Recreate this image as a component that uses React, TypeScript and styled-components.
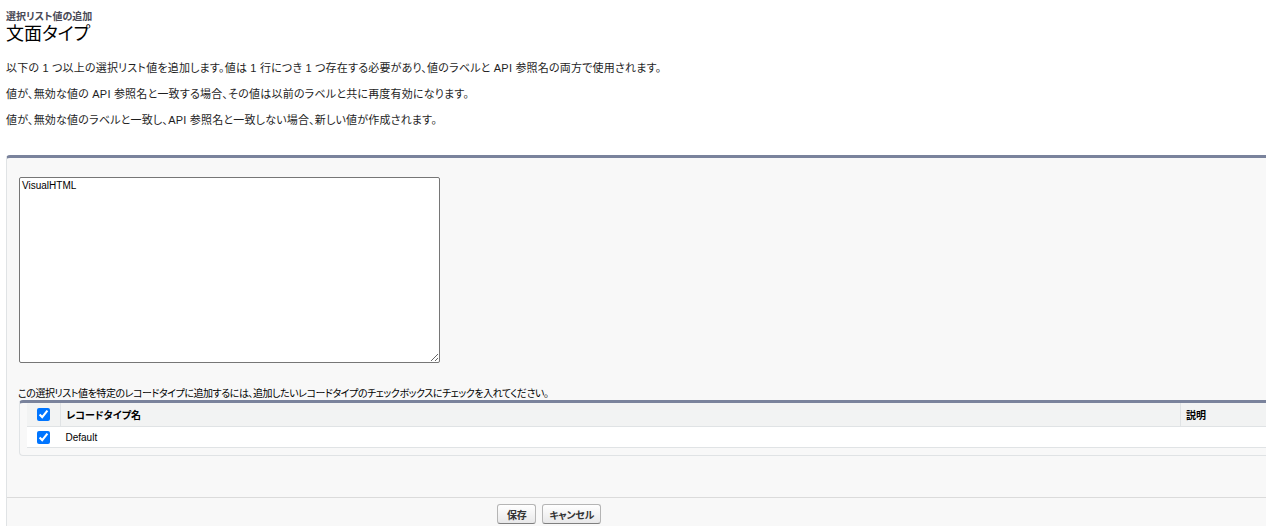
import React from "react";
import styled, { createGlobalStyle } from "styled-components";

const GlobalStyle = createGlobalStyle`
  html, body { margin: 0; padding: 0; background: #ffffff; }
  body {
    font-family: "Liberation Sans", "Noto Sans CJK JP", Arial, sans-serif;
    font-size: 11px;
    color: #222222;
    overflow: hidden;
    font-feature-settings: "palt";
  }
  button, textarea { font-feature-settings: "palt"; }
`;

const Page = styled.div`
  display: flex;
  flex-direction: column;
  min-height: 526px;
`;

const Header = styled.div`
  padding: 11px 0 0 6px;
  display: flex;
  flex-direction: column;
`;

const SubTitle = styled.h2`
  margin: 0;
  font-size: 10px;
  line-height: 12px;
  font-weight: bold;
  color: #4a4a56;
`;

const Title = styled.h1`
  margin: 1px 0 0 0;
  font-size: 18px;
  line-height: 20px;
  font-weight: normal;
  color: #000000;
`;

const Intro = styled.div`
  padding: 17px 0 0 6px;
  display: flex;
  flex-direction: column;
  gap: 12px;
`;

const Para = styled.p`
  margin: 0;
  font-size: 11px;
  line-height: 14px;
  letter-spacing: 0.2px;
  color: #1e1e1e;
`;

const PageBlock = styled.div`
  margin: 28px 0 0 6px;
  flex: 1;
  background: #f8f8f8;
  border-top: 3px solid #7a839c;
  border-left: 1px solid #e0e3e5;
  border-radius: 4px 0 0 0;
  display: flex;
  flex-direction: column;
`;

const BlockBody = styled.div`
  padding: 19px 0 0 12px;
  display: flex;
  flex-direction: column;
`;

const TextArea = styled.textarea`
  box-sizing: border-box;
  width: 421px;
  height: 186px;
  margin: 0;
  padding: 2px;
  border: 1px solid #767676;
  border-radius: 2px;
  background: #ffffff;
  font-family: "Liberation Sans", Arial, sans-serif;
  font-size: 10px;
  color: #000000;
  resize: both;
`;

const Hint = styled.div`
  margin: 25px 0 0 -1px;
  font-size: 10px;
  line-height: 12px;
  letter-spacing: -0.45px;
  color: #000000;
`;

const RelatedList = styled.div`
  background: #f8f8f8;
  border-top: 3px solid #7a839c;
  border-left: 1px solid #e0e3e5;
  border-bottom: 1px solid #e0e3e5;
  border-radius: 4px 0 0 4px;
  padding: 0 0 7px 7px;
`;

const Table = styled.table`
  width: 100%;
  border-collapse: collapse;
  background: #ffffff;
`;

const HeadCell = styled.th<{ $w?: number; $divider?: boolean }>`
  background: #f2f3f3;
  height: 23px;
  padding: 0 5px;
  text-align: left;
  font-size: 10px;
  font-weight: bold;
  color: #000000;
  border-bottom: 1px solid #e0e3e5;
  border-left: ${(p) => (p.$divider ? "1px solid #e0e3e5" : "none")};
  width: ${(p) => (p.$w ? `${p.$w}px` : "auto")};
`;

const Cell = styled.td`
  height: 20px;
  padding: 0 5px;
  font-size: 10px;
  color: #000000;
  border-bottom: 1px solid #e0e3e5;
`;

const CheckCell = styled.div`
  display: flex;
  align-items: center;
  justify-content: center;
`;

const Check = styled.input`
  width: 13px;
  height: 13px;
  margin: 0;
  accent-color: #0075ff;
`;

const Footer = styled.div`
  margin-top: 41px;
  border-top: 1px solid #dbdbdb;
  display: grid;
  grid-template-columns: 490px auto;
  padding-top: 6px;
  flex: 1;
`;

const Buttons = styled.div`
  grid-column: 2;
  display: flex;
  gap: 6px;
  align-items: flex-start;
`;

const Button = styled.button<{ $pad: number }>`
  height: 20px;
  padding: 0 ${(p) => p.$pad}px;
  border: 1px solid #b5b5b5;
  border-bottom-color: #7f7f7f;
  border-radius: 3px;
  background: linear-gradient(#ffffff, #e8e8e9);
  font-family: "Noto Sans CJK JP", sans-serif;
  font-size: 10px;
  font-weight: bold;
  letter-spacing: -0.3px;
  color: #333333;
  cursor: pointer;
`;

export default function App() {
  return (
    <Page>
      <GlobalStyle />
      <Header>
        <SubTitle>選択リスト値の追加</SubTitle>
        <Title>文面タイプ</Title>
      </Header>
      <Intro>
        <Para>以下の 1 つ以上の選択リスト値を追加します。値は 1 行につき 1 つ存在する必要があり、値のラベルと API 参照名の両方で使用されます。</Para>
        <Para>値が、無効な値の API 参照名と一致する場合、その値は以前のラベルと共に再度有効になります。</Para>
        <Para>値が、無効な値のラベルと一致し、API 参照名と一致しない場合、新しい値が作成されます。</Para>
      </Intro>
      <PageBlock>
        <BlockBody>
          <TextArea defaultValue="VisualHTML" />
          <Hint>この選択リスト値を特定のレコードタイプに追加するには、追加したいレコードタイプのチェックボックスにチェックを入れてください。</Hint>
          <RelatedList>
            <Table>
              <thead>
                <tr>
                  <HeadCell $w={23}>
                    <CheckCell>
                      <Check type="checkbox" defaultChecked />
                    </CheckCell>
                  </HeadCell>
                  <HeadCell $divider>レコードタイプ名</HeadCell>
                  <HeadCell $w={75} $divider>説明</HeadCell>
                </tr>
              </thead>
              <tbody>
                <tr>
                  <Cell>
                    <CheckCell>
                      <Check type="checkbox" defaultChecked />
                    </CheckCell>
                  </Cell>
                  <Cell>Default</Cell>
                  <Cell></Cell>
                </tr>
              </tbody>
            </Table>
          </RelatedList>
        </BlockBody>
        <Footer>
          <Buttons>
            <Button $pad={9}>保存</Button>
            <Button $pad={6}>キャンセル</Button>
          </Buttons>
        </Footer>
      </PageBlock>
    </Page>
  );
}
